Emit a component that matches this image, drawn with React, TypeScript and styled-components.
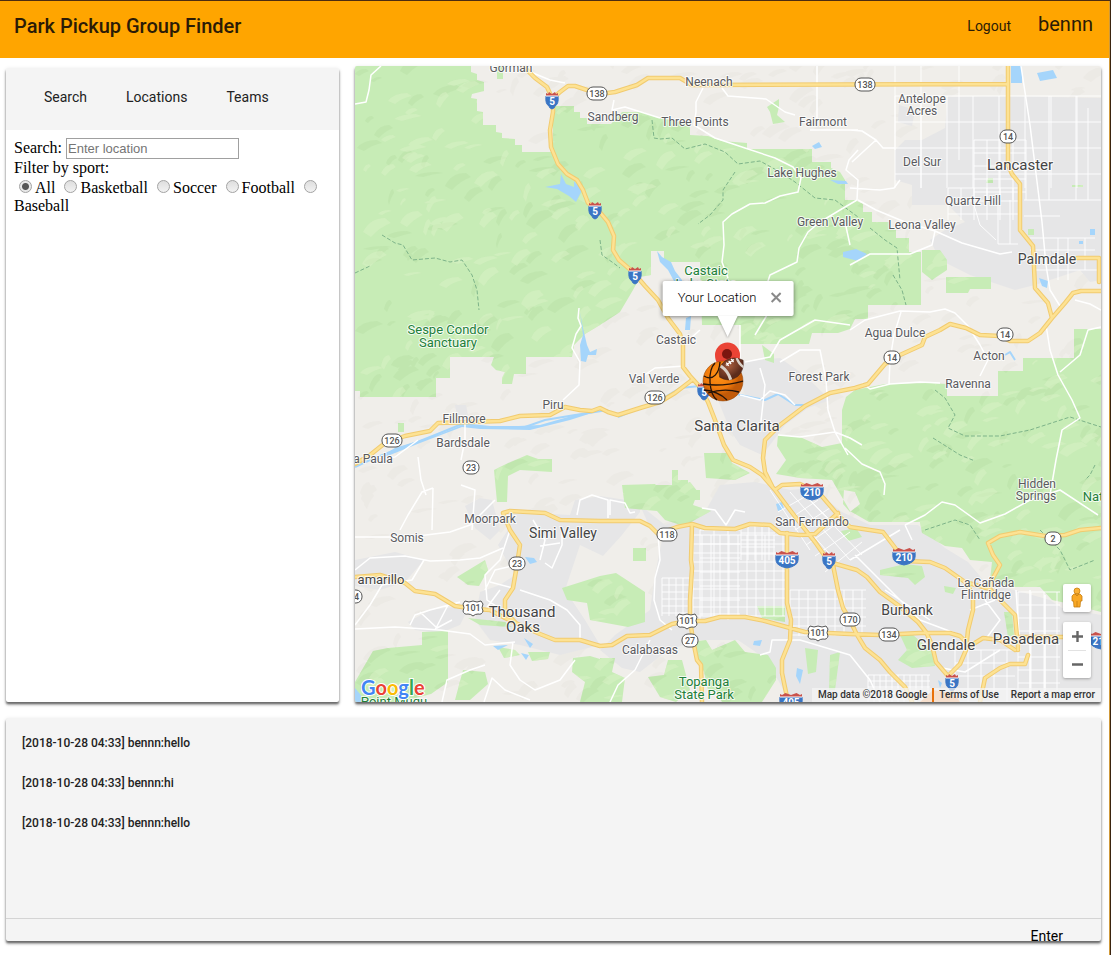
import React, { useState } from 'react';
import styled, { createGlobalStyle } from 'styled-components';

const GlobalStyle = createGlobalStyle`
  *, *::before, *::after { box-sizing: border-box; }
  body { margin: 0; background: #fff; color: #000; font-family: Roboto, sans-serif; }
  button, input { font: inherit; }
`;

const Frame = styled.div`
  min-height: 100vh;
  border-top: 1px solid #4d2c10;
  border-right: 1px solid #3a2410;
  display: flex;
`;

const Page = styled.div`
  flex: 1;
  min-width: 0;
  display: flex;
  flex-direction: column;
  border-right: 1px solid #d09a3a;
`;

const Header = styled.header`
  display: flex;
  align-items: flex-start;
  justify-content: space-between;
  min-height: 57px;
  padding: 11px 16px 0 14px;
  background: #ffa500;
  color: #2b1b06;
`;

const Title = styled.h1`
  margin: 0;
  padding-top: 2px;
  font-size: 20px;
  line-height: 24px;
  font-weight: 500;
`;

const Account = styled.div`
  display: flex;
  gap: 27px;
  align-items: flex-start;
`;

const LogoutLink = styled.a`
  padding-top: 2px;
  color: inherit;
  font-size: 14px;
  line-height: 24px;
  text-decoration: none;
`;

const UserName = styled.span`
  font-size: 20px;
  line-height: 24px;
`;

const Content = styled.main`
  flex: 1;
  display: flex;
  flex-direction: column;
  gap: 16px;
  padding: 8px 8px 14px 6px;
`;

const TopRow = styled.div`
  flex: 1;
  display: grid;
  grid-template-columns: 333fr 746fr;
  gap: 16px;
  min-height: 480px;
`;

const Panel = styled.section`
  position: relative;
  overflow: hidden;
  background: #fff;
  border-radius: 2px;
  box-shadow: 0 2px 2px rgba(0, 0, 0, 0.4), 0 3px 3px rgba(0, 0, 0, 0.25),
    0 1px 4px rgba(0, 0, 0, 0.12);
`;

const SidePanel = styled(Panel)`
  margin-top: 2px;
`;

const Tabs = styled.nav`
  display: flex;
  align-items: center;
  gap: 1px;
  min-height: 62px;
  padding: 0 19px 4px;
  background: #f4f4f4;
`;

const Tab = styled.button`
  border: 0;
  background: none;
  padding: 0 19px;
  font-size: 14px;
  line-height: 24px;
  color: #222;
  cursor: pointer;
`;

const SearchForm = styled.form`
  padding: 8px;
  font-family: 'Liberation Serif', serif;
  font-size: 16px;
  line-height: 18px;
`;

const SearchInput = styled.input`
  width: 173px;
  height: 21px;
  padding: 1px;
  border: 1px solid #a0a0a0;
  font-family: 'Liberation Sans', sans-serif;
  font-size: 13px;
  &::placeholder { color: #757575; opacity: 1; }
`;

const Filters = styled.fieldset`
  margin: 0;
  padding: 0;
  border: 0;
  min-width: 0;
`;

const Legend = styled.legend`
  padding: 0;
`;

const Radio = styled.input`
  appearance: none;
  width: 13px;
  height: 13px;
  margin: 3px 3px 0 5px;
  border: 1px solid #a3a3a3;
  border-radius: 50%;
  background: linear-gradient(#dedede, #f2f2f2);
  &:checked { background: radial-gradient(circle, #555 0 3px, #e8e8e8 4px); }
`;

const MapCanvas = styled.svg`
  position: absolute;
  inset: 0;
  width: 100%;
  height: 100%;
  background: #f0eeea;
  font-family: Roboto, sans-serif;
`;

const InfoWindow = styled.div`
  position: absolute;
  left: 50%;
  bottom: calc(50% + 68px);
  transform: translateX(-50%);
  display: flex;
  align-items: center;
  gap: 14px;
  height: 35px;
  padding: 0 12px 2px 15px;
  white-space: nowrap;
  background: #fff;
  border-radius: 2px;
  box-shadow: 0 1px 4px rgba(0, 0, 0, 0.45);
  font-size: 13px;
  font-weight: 300;
  line-height: 18px;
  color: #000;
  &::after {
    content: '';
    position: absolute;
    top: 100%;
    left: 50%;
    margin-left: -10px;
    border: 10px solid transparent;
    border-top: 21px solid #fff;
    border-bottom: 0;
    filter: drop-shadow(0 1px 1px rgba(0, 0, 0, 0.3));
  }
`;

const IconButton = styled.button`
  display: grid;
  place-items: center;
  padding: 0;
  border: 0;
  background: none;
  cursor: pointer;
`;

const Controls = styled.div`
  position: absolute;
  right: 10px;
  bottom: 24px;
  display: flex;
  flex-direction: column;
  gap: 10px;
`;

const ControlBox = styled.div`
  width: 28px;
  background: #fff;
  border-radius: 2px;
  box-shadow: 0 1px 3px rgba(0, 0, 0, 0.3);
`;

const ControlButton = styled(IconButton)`
  width: 28px;
  height: 28px;
`;

const Divider = styled.hr`
  margin: 0 5px -1px;
  border: 0;
  height: 1px;
  background: #e2e2e2;
`;

const Attribution = styled.div`
  position: absolute;
  right: 0;
  bottom: 0;
  display: flex;
  padding: 0 6px;
  background: rgba(245, 245, 245, 0.72);
  font-size: 10px;
  font-weight: 500;
  line-height: 14px;
  color: #333;
  a { color: inherit; text-decoration: none; margin-left: 12px; }
  a:first-of-type { margin-left: 5px; padding-left: 5px; border-left: 2px solid #e8710a; }
`;

const Chat = styled(Panel)`
  background: #f4f4f4;
`;

const Messages = styled.ul`
  list-style: none;
  margin: 0;
  padding: 5px 16px 0;
  min-height: 200px;
`;

const Message = styled.li`
  font-size: 12px;
  font-weight: 500;
  line-height: 40px;
  color: #222;
`;

const Composer = styled.form`
  display: flex;
  align-items: flex-start;
  height: 23px;
  padding: 0 22px 0 16px;
  border-top: 1px solid #d4d4d4;
`;

const ComposerInput = styled.input`
  flex: 1;
  min-width: 0;
  height: 22px;
  border: 0;
  outline: 0;
  background: none;
  font-size: 14px;
`;

const EnterButton = styled.button`
  padding: 0 16px;
  border: 0;
  background: none;
  font-size: 14px;
  line-height: 34px;
  color: #000;
`;

/* ---------- map data ---------- */

const forests = [
  'M355 66H471V72L477 74V80L484 82V91L472 94L471 98L477 99V111L483 112V125H496V132L502 133V138L515 139V145H522V152H553V106H574V112H580V118H587V124H611L622 112H643L655 117L690 124V135L708 136L722 141L747 143V149H812V162H831V168L840 172L845 180V200H855L863 204V212H872V222H889V229L896 230V238H909V252H921V305H868V319H855L850 329L838 333H812L809 344H740V325H702L700 262H664V251H651V275L640 277L633 290L620 312L600 325L585 334L574 345L572 357H526V374H514L512 384H502V378L505 372L496 370L491 365L494 357H450V378H436V397H360V391H355Z',
  'M1101 329H1074V358H1023V371H998V396H947V384L930 383L885 384L855 390L846 397L842 410V443L822 447L800 437L778 435L777 446L786 460L776 474L800 478L832 480L850 511L869 522H920L922 533L945 546L962 548L970 560L992 562L990 580L1010 587H1040L1052 600L1075 605L1101 612Z',
  'M922 250H940L947 260V270L932 280L922 272ZM946 277H991V289H970L968 293H946Z',
  'M494 470L506 464L527 455L538 459H552V472L520 470L508 476L507 502H497Z',
  'M562 588L600 576L616 573L645 592V622L628 627L590 620L587 603L567 600Z',
  'M622 485L655 484L662 492L690 482L698 492L693 505L711 511L684 526L665 520L657 511L625 508Z',
  'M704 453H728L732 463L750 473L735 480L706 478Z',
  'M672 470H678V480H688V490H700V500H684V493H640V485H672Z',
  'M355 682L373 651L388 648L422 645V632L448 631V682L431 694L400 702H355Z',
  'M457 577L485 560L488 570L479 586L468 585ZM468 618L505 622L512 627L480 625Z',
  'M633 548H646V561H633ZM757 606H785V622L762 618Z',
  'M690 642L706 640L712 650L735 640L745 652L768 655L776 668V680L762 702H722L716 690H708L704 672Z',
  'M600 658L615 658L612 672L625 678L622 702H600ZM648 677L664 675L668 660H682L690 690L676 702L660 697Z',
  'M463 670L485 672L488 684L470 700H455ZM573 658L590 656L610 662V702H580L585 682L572 672Z',
  'M498 647L515 650L520 655L504 658ZM528 652L550 652L548 659L532 661Z',
  'M844 490L855 492L860 504L850 512L843 504ZM841 531L856 528L862 537L848 541Z',
  'M880 570L905 564L922 566L925 577L915 585L908 578L880 575ZM944 586L956 588L953 594L945 592Z',
  'M900 635L912 634L932 652L935 666L912 668L898 660L907 650Z',
  'M1004 612L1012 612L1014 635L1008 637ZM805 648L818 650L816 672L808 674ZM830 655L840 652L835 690H829Z',
  'M988 178H993V183H986ZM1028 229H1034V235H1028ZM1072 185H1083V187H1072ZM767 107L779 99V107L777 115L785 122L773 124L770 112Z',
  'M398 423H404V432H398ZM497 66H503V79H497ZM762 345L774 354V363L765 360Z',
];

const urban = [
  'M948 97L1008 96L1101 98V280L1090 282L1080 270L1035 285L1015 290L970 275L940 260L930 240L945 230L965 222L948 205H912V185L895 180V150L905 140H922L945 128Z',
  'M899 105L915 110L912 126L898 122Z',
  'M735 362L780 358L800 372L815 385L830 400L808 408L785 425L770 445L762 455L740 445L730 430L718 400L745 395Z',
  'M640 505L665 525L705 512L720 485L755 482L790 490L812 488L842 512L870 525L918 525L945 548L968 562L985 582L1050 600L1062 608L1101 615V702H790L778 680L760 655L738 640L700 640L668 650L640 672L622 668L600 650L615 635L650 610L655 575L662 540L650 528Z',
  'M515 512L570 515L575 500L600 496L640 502L640 512L622 535L603 556L580 545L565 590L585 620L600 645L560 655L520 645L490 640L475 620L480 592L500 585L515 575L498 545L508 530Z',
  'M465 506L480 498L492 500L500 530L490 540L475 528ZM355 560L395 552L424 560L405 582L380 590L355 586Z',
  'M408 622L430 610L470 605L460 625L440 633L415 630ZM455 405H466L468 415H457Z',
];

const lakes = [
  'M545 187L560 184L561 174L566 184L574 187V181L582 190L576 202L569 196L557 189Z',
  'M657 251L662 257L671 262L675 271L682 280L684 295L675 283L668 270L660 262Z',
  'M580 312L583 328L587 345L590 352L597 349L596 355L588 355L586 362L581 361L580 345L583 335Z',
  'M686 318L691 316L690 330L685 330ZM843 252L856 249L867 254L858 261L843 257Z',
  'M812 146L819 142L822 147L815 149ZM830 180L846 181L848 184L838 184Z',
  'M1037 73L1053 70L1057 78L1040 81ZM1011 66H1022V83H1011ZM1090 229H1095V235H1090Z',
  'M1039 278L1048 281L1047 288L1042 286ZM525 557L534 558L537 562L530 564ZM1079 241H1083V244H1079Z',
  'M776 504L782 502L784 509L778 511ZM754 641L762 640L760 646L753 645ZM797 668L803 670L800 684L796 676Z',
  'M493 646L508 645L498 650ZM524 638L533 644L530 648ZM521 653L529 655L526 660Z',
  'M355 688L360 694L366 702H355ZM938 680L942 683L940 688Z',
];

const highways = [
  'M523 66L535 78L547 87L553 100V112L550 130L551 147L558 164L567 174L577 180L583 190L588 203L598 210L608 222L614 236L613 250L619 260L633 272L645 286L658 300L668 318L680 334L683 345V367L690 376L700 387L708 402L715 420L724 445L733 460L750 467L762 475L775 490L790 510L800 523L815 542L829 562L857 570L867 577L880 592L898 605L918 622L926 632L932 645L936 662L948 676L952 690',
  'M553 98L560 92L568 86H575L590 91L600 94L615 92L637 85L648 78H680L692 85L1008 84',
  'M1008 66V165L1012 174L1020 184V230L1033 246L1035 288L1048 303L1052 318L1040 333L1028 341H1010L1000 336L980 335L966 328L950 324L940 330L925 337L922 345L900 355L885 364L868 384L855 388L830 393L805 406L780 425L765 440L763 458L765 472L772 486',
  'M1052 318L1065 303L1073 293L1081 291H1101M1077 258H1099V282',
  'M355 464L370 455L385 443L405 436L430 431L438 423L470 422L500 421L520 416L550 415L565 407L580 410L592 411L600 408L608 412L618 415L640 408L660 402L675 393L692 380',
  'M355 577L380 575L405 583L415 591L435 594L455 606L475 609L490 610L505 618L520 625L540 634L555 640H580L600 646L612 645L627 636L650 635L672 624L687 621H705L720 617H745L765 621L790 628L805 632L850 634L880 635L920 633L950 633L960 636L970 646L983 638L1000 640L1015 650',
  'M503 513L510 511L545 513L560 520L600 521H640L650 526L658 534L677 527L692 524L705 528L735 529L750 524L770 525L780 533L800 535L815 534L828 522L838 513',
  'M503 513L510 530L520 545L517 565L513 588L505 600V612L516 623',
  'M692 524L691 560L692 568L690 600V620L693 640L697 660L701 665L702 702',
  'M775 490L782 485L800 484L820 494L838 515L850 527L883 532L893 545L905 561L930 562L945 568L965 582L990 589L1000 600L1015 615L1017 637H1101',
  'M787 533V603L791 620L790 640L782 660V673L788 702',
  'M833 565L838 590L843 608L850 620L856 633L865 648L880 660L890 672L905 687L912 702',
  'M990 589L993 578L1000 565L993 555L988 543L1000 536L1020 532L1045 536L1065 535L1080 530L1101 528',
  'M966 583L973 595V610L968 630L966 650L960 664L948 676',
  'M1028 655L1025 664L1010 664L1000 668L985 678L980 702M1018 637V650',
];

const minorRoads = [
  'M355 104L366 102L369 90L371 75L381 66M533 73L550 80L565 83',
  'M703 88L696 102V112L694 125L715 138L745 148L775 158L793 167L801 178L798 192L780 196L765 203L750 204L732 214L723 222L724 245L722 262L728 278M722 88L728 96L766 99L785 112L795 115M817 66V125M810 130H858',
  'M614 100L612 110L625 107L660 118',
  'M857 200L840 210L820 222L808 232L799 248L797 262L770 275L765 290L767 315L755 335M845 222L850 245M857 200L858 180L846 170L849 160L858 150',
  'M850 130L862 131L876 140L883 148H895M876 140L852 162M850 188L880 190L894 188L900 180M858 200L876 210L905 222L935 231L962 243L1000 254L1012 252M935 231L932 245L910 254L870 254L850 265',
  'M1021 66L1030 125L1042 222L1046 265L1050 290L1060 306M1046 325L1050 350L1058 375L1072 400L1080 418L1062 430L1056 460L1050 495',
  'M850 330L865 320L900 311L930 312L945 309L955 313L968 326L980 345L988 360L980 376M901 312L894 335L890 360L889 384M862 383L870 389L890 384L920 382L940 383',
  'M1101 327L1088 330L1080 355L1060 372M1101 310L1090 304L1075 300',
  'M579 308L578 318L581 326L576 334L572 348L580 362L579 385L563 400M465 422V440L461 460M418 440L395 457L372 458M418 457L421 480L426 495',
  'M461 485L475 490L472 530M400 530L408 515L422 492L433 488M433 488L432 530M355 537H410L450 532L470 525L495 500',
  'M355 570L370 558L405 556L430 561L460 560L480 558L503 548M424 560L412 580L382 585M382 585L370 605L355 625',
  'M355 629L395 627L440 630L470 634L485 645L515 642',
  'M410 625L415 615L430 610L460 602M435 630L448 605M420 612L437 628L452 620M513 642L510 665L520 680L535 690L560 680L575 660',
  'M442 702L447 680L470 670L485 665M484 702L492 678L505 690L530 700M610 702L618 685L635 670L650 640',
  'M510 530L500 560L485 575L487 600L505 612M517 565L495 570L485 590M513 588L490 582M533 520L545 540L540 560M577 515L580 500L592 495L608 500V518M540 546L560 543M545 563L552 568L562 545V530M520 590L550 600L567 610L580 625V640M485 610L500 590',
  'M600 521H628M610 515V500L625 503L630 513L635 512M658 534L660 560L655 578L654 600L660 620L672 630M702 508L715 510L726 525L735 510L745 512',
  'M683 345L700 330M640 378L655 368L685 366M740 395L760 400L770 391L785 395L795 405M745 362L770 357L780 340L815 320L850 325M740 325V362M760 368L765 385L760 430M780 362L800 350H820L826 380L828 410L835 432L850 438L862 445',
  'M778 435L800 437L835 432L848 455M845 448L862 464L880 472L885 484L884 495M905 525L925 515L942 502L955 505L980 523L1005 514L1030 500L1060 490L1098 515',
  'M905 525L912 540M760 655L770 652L772 640L800 640L850 655M850 560L900 530M855 555L920 620L960 635M885 590L930 620M942 668L965 672L1000 650M970 610L995 600M850 655L870 680L880 702',
  'M1016 590L1020 650M1030 590V700M1045 595V700M985 600L1000 620L985 640',
];

const rivers = [
  'M355 467L370 460L395 450L415 443L440 433L462 424L490 427L525 427L545 420L575 415L608 410',
  'M618 417L635 410L655 403L680 388L700 386L745 396L765 400L778 394L795 405H808M1005 355L1010 352L1015 360',
];

const trails = [
  'M382 235L395 243L403 245L412 260L435 258L450 262L462 260L472 275L477 290L479 310M355 273L370 266',
  'M652 120L654 138L660 139L672 138L685 149L705 144L725 152L738 164L760 161L780 172L795 182L815 198L835 200L858 217M735 172L723 190V200L710 215L698 224',
  'M893 275L902 290L906 305M870 228L885 240L897 248L900 280M935 390L945 398L955 415L948 428L965 436L1000 436L1030 430L1070 417L1101 427M933 438L960 455L975 461',
  'M925 530L955 520L970 525L980 540M1040 530L1060 550L1070 570L1095 560M600 240L602 255L612 262L620 268M1095 465L1090 475L1085 480',
];

const range = (from: number, to: number, step: number) =>
  Array.from({ length: Math.floor((to - from) / step) + 1 }, (_, i) => from + i * step);

const streetGrid = (x1: number, y1: number, x2: number, y2: number, step: number) =>
  range(x1, x2, step).map((x) => `M${x} ${y1}V${y2}`).join('') +
  range(y1, y2, step).map((y) => `M${x1} ${y}H${x2}`).join('');

const coarseStreets =
  streetGrid(895, 96, 1101, 188, 26) +
  streetGrid(974, 140, 1026, 200, 13) +
  streetGrid(948, 188, 1020, 220, 13) +
  'M921 66V188M895 66V150M959 66V160M1088 108V200M1049 96V200M1076 96V200M998 200V244M1010 200V244M998 244H1018M1024 200H1101M1024 216H1060M1030 238H1095M1030 250H1095M1058 238V280M1068 238V280M1085 238V270M1035 270H1099M974 205L980 225L996 240';
const fineStreets =
  streetGrid(693, 535, 785, 616, 9) +
  streetGrid(741, 526, 775, 560, 7) +
  streetGrid(662, 578, 690, 616, 7) +
  streetGrid(790, 590, 866, 636, 9) +
  streetGrid(700, 530, 740, 620, 14);
const denseStreets = streetGrid(868, 675, 930, 702, 6) + streetGrid(1018, 592, 1060, 690, 13) + streetGrid(955, 650, 1015, 702, 13);
const diagonalStreets = 'M780 498L835 560M790 492L850 560M800 490L862 555M810 500L830 520M778 512L808 495M785 522L818 500M795 530L830 508M806 545L842 520M815 556L850 532M825 572L862 542M770 490L810 550';

/* Relief shading: slanted facets from a seeded generator. */
const facets = (count: number, seed: number) => {
  let s = seed;
  const rnd = () => {
    s = (s * 16807) % 2147483647;
    return s / 2147483647;
  };
  let d = '';
  for (let i = 0; i < count; i++) {
    const x = Math.round(355 + rnd() * 746);
    const y = Math.round(66 + rnd() * 636);
    const w = Math.round(5 + rnd() * 18);
    const h = Math.round(3 + rnd() * 11);
    d += `M${x} ${y}q${Math.round(w * 0.3)} ${-h} ${w} ${-h}l${Math.round(w / 4)} ${Math.round(h / 3)}q${-Math.round(w * 0.5)} ${Math.round(h * 0.3)} ${-Math.round(w * 0.9)} ${h}z`;
  }
  return d;
};
const reliefDark = facets(600, 91);
const reliefLight = facets(560, 4711);

type LabelSpec = [string, number, number, number?, string?];
const TOWN = '#5a5a5e';
const CITY = '#444';
const PARK = '#23803a';
const labels: LabelSpec[] = [
  ['Gorman', 511, 72], ['Neenach', 709, 86], ['Sandberg', 613, 121], ['Three Points', 695, 126],
  ['Fairmont', 823, 126], ['Antelope', 922, 103], ['Acres', 922, 115], ['Del Sur', 922, 166],
  ['Lancaster', 1020, 170, 15, CITY], ['Lake Hughes', 802, 177], ['Quartz Hill', 973, 205],
  ['Green Valley', 830, 226], ['Leona Valley', 922, 229], ['Palmdale', 1047, 264, 14, CITY],
  ['Castaic', 706, 275, 13, PARK], ['Lake State', 706, 288, 13, PARK],
  ['Sespe Condor', 448, 334, 13, PARK], ['Sanctuary', 448, 347, 13, PARK],
  ['Castaic', 676, 344], ['Agua Dulce', 895, 337], ['Acton', 989, 360], ['Ravenna', 968, 388],
  ['Val Verde', 654, 383], ['Forest Park', 819, 381], ['Piru', 553, 409], ['Fillmore', 464, 423],
  ['Bardsdale', 463, 447], ['a Paula', 373, 463], ['Santa Clarita', 737, 431, 15, CITY],
  ['Moorpark', 490, 523], ['Simi Valley', 563, 538, 14, CITY], ['Somis', 407, 542],
  ['San Fernando', 812, 526], ['Hidden', 1037, 488], ['Springs', 1036, 500],
  ['National', 1107, 501, 13, PARK], ['amarillo', 381, 584, 13, CITY],
  ['Thousand', 522, 617, 15, CITY], ['Oaks', 523, 632, 15, CITY], ['Calabasas', 650, 654],
  ['Topanga', 704, 686, 13, PARK], ['State Park', 704, 699, 13, PARK],
  ['La Cañada', 986, 587], ['Flintridge', 986, 599], ['Burbank', 907, 615, 14, CITY],
  ['Glendale', 946, 650, 15, CITY], ['Pasadena', 1026, 644, 15, CITY],
  ['Point Mugu', 394, 706, 13, PARK],
];

type ShieldKind = 'state' | 'us' | 'interstate';
const shields: [ShieldKind, string, number, number][] = [
  ['interstate', '5', 552, 100], ['interstate', '5', 595, 210], ['interstate', '5', 635, 275],
  ['interstate', '5', 704, 391], ['interstate', '210', 812, 491], ['interstate', '405', 787, 559],
  ['interstate', '5', 829, 560], ['interstate', '210', 904, 556], ['interstate', '5', 952, 682],
  ['interstate', '210', 1101, 640], ['interstate', '405', 791, 701],
  ['state', '138', 597, 94], ['state', '138', 865, 85], ['state', '14', 1008, 137],
  ['state', '14', 1005, 335], ['state', '14', 892, 358], ['state', '126', 655, 398],
  ['state', '126', 392, 441], ['state', '23', 471, 468], ['state', '118', 667, 535],
  ['state', '23', 517, 564], ['state', '2', 1053, 539], ['state', '27', 690, 641],
  ['state', '170', 850, 620], ['state', '134', 889, 635], ['state', '34', 354, 597],
  ['us', '101', 473, 608], ['us', '101', 687, 621], ['us', '101', 818, 633],
];

function Shield({ kind, text, x, y }: { kind: ShieldKind; text: string; x: number; y: number }) {
  const wide = text.length > 2;
  if (kind === 'interstate') {
    const w = wide ? 11 : 6;
    return (
      <g transform={`translate(${x} ${y})`}>
        <path d={`M${-w} -4H${w}Q${w + 1} 4 ${w - 3} 6Q${w / 2} 8 0 9Q${-w / 2} 8 ${3 - w} 6Q${-w - 1} 4 ${-w} -4Z`} fill="#3a75c4" stroke="#3a75c4" strokeWidth="1" />
        <path d={`M${-w} -4V-7L${-w + 2} -6L${-w / 2} -8L0 -6L${w / 2} -8L${w - 2} -6L${w} -7V-4Z`} fill="#c9524c" />
        <path d={`M${-w} -4H${w}`} stroke="#fff" strokeWidth="1" />
        <text y="5" textAnchor="middle" fontSize="10" fontWeight="700" fill="#fff">{text}</text>
      </g>
    );
  }
  const w = wide ? 10 : 8;
  return (
    <g transform={`translate(${x} ${y})`}>
      {kind === 'state' ? (
        <rect x={-w} y="-7" width={w * 2} height="13" rx="6" fill="#fff" stroke="#555" />
      ) : (
        <path d="M-8 -7Q-4 -5 0 -7Q4 -5 8 -7L10 -4Q8 0 10 3Q9 7 5 6Q2 6 0 8Q-2 6 -5 6Q-9 7 -10 3Q-8 0 -10 -4Z" fill="#fff" stroke="#555" />
      )}
      <text y="3" textAnchor="middle" fontSize="9" fontWeight="500" fill="#555">{text}</text>
    </g>
  );
}

function Markers() {
  return (
    <g>
      <path d="M728 384C727 371 715 367 715 355A12.500 12.500 0 0 1 740 355C740 367 729 371 728 384Z" fill="#ea4335" />
      <circle cx="727" cy="354" r="5" fill="#7c160f" />
      <circle cx="723" cy="381" r="20" fill="url(#ball)" stroke="#8a4308" strokeWidth="0.500" />
      <path d="M703 384Q722 387 743 381M720 362C719 374 713 380 706 377L704 376M704 390Q718 391 727 400M715 363C707 371 709 394 717 400M708 393Q724 388 739 392" fill="none" stroke="#251408" strokeWidth="1.300" />
      <g transform="translate(731 369) rotate(-36)">
        <path d="M-14 0Q-10 -10 1 -10Q10 -9 15 0Q10 9 1 10Q-10 10 -14 0Z" fill="url(#football)" stroke="#3f1f14" strokeWidth="0.500" />
        <path d="M-8 -8Q-5 0 -8 8L-5 9Q-2 0 -5 -9ZM10 -6Q8 0 10 6L12 5Q11 0 12 -5Z" fill="#d9d0c8" />
        <path d="M-2 -6H8M0 -8V-4M3 -8V-4M6 -8V-4" stroke="#fff" strokeWidth="1.300" fill="none" />
      </g>
    </g>
  );
}

function AreaMap() {
  const forestPath = forests.join('');
  return (
    <MapCanvas viewBox="355 66 746 636" preserveAspectRatio="xMidYMid slice" role="img" aria-label="Map of Santa Clarita and surroundings">
      <defs>
        <clipPath id="forestClip"><path d={forestPath} /></clipPath>
        <radialGradient id="ball" cx="0.400" cy="0.350">
          <stop offset="0" stopColor="#ff9416" />
          <stop offset="0.700" stopColor="#f07a0c" />
          <stop offset="1" stopColor="#c25a08" />
        </radialGradient>
        <radialGradient id="football" cx="0.500" cy="0.350">
          <stop offset="0" stopColor="#a35a3c" />
          <stop offset="1" stopColor="#5c2c1c" />
        </radialGradient>
      </defs>
      <path d={reliefDark} fill="#e4e2dd" opacity="0.350" />
      <path d={urban.join('')} fill="#e6e6e7" />
      <path d={forestPath} fill="#c7ecb6" />
      <g clipPath="url(#forestClip)">
        <path d={reliefDark} fill="#b0d9a0" opacity="0.320" />
        <path d={reliefLight} fill="#daf2c6" opacity="0.500" />
      </g>
      <path d={lakes.join('')} fill="#a5d5fb" />
      <path d={rivers.join('')} fill="none" stroke="#a5d5fb" strokeWidth="2" strokeLinejoin="round" />
      <path d="M372 462L395 448L440 434L462 425L500 427L540 425L575 415L595 412L570 420L530 430L480 429L462 427L420 443L385 457Z" fill="#a5d5fb" />
      <path d={trails.join('')} fill="none" stroke="#7db389" strokeWidth="1" strokeDasharray="4 2" />
      <g fill="none" stroke="#fff" strokeLinejoin="round">
        <path d={coarseStreets} strokeWidth="1" strokeOpacity="0.900" />
        <path d={fineStreets + diagonalStreets} strokeWidth="1" strokeOpacity="0.900" />
        <path d={denseStreets} strokeWidth="1" strokeOpacity="0.900" />
        <path d={minorRoads.join('')} strokeWidth="1.500" />
      </g>
      <g fill="none" strokeLinejoin="round" strokeLinecap="round">
        <path d={highways.join('')} stroke="#f1cb70" strokeWidth="4.500" />
        <path d={highways.join('')} stroke="#fde293" strokeWidth="2.500" />
      </g>
      <path d="M920 702L933 690L955 694L960 702Z" fill="#f7a566" />
      <g textAnchor="middle" stroke="#fff" strokeWidth="2" strokeOpacity="0.800" strokeLinejoin="round" paintOrder="stroke">
        {labels.map(([text, x, y, size = 12, color = TOWN]) => (
          <text key={text + x + y} x={x} y={y} fontSize={size} fill={color}>{text}</text>
        ))}
      </g>
      {shields.map(([kind, text, x, y]) => (
        <Shield key={text + x + y} kind={kind} text={text} x={x} y={y} />
      ))}
      <Markers />
    </MapCanvas>
  );
}

const GoogleMark = styled.a`
  position: absolute;
  left: 6px;
  bottom: 0;
  display: block;
  line-height: 0;
`;

function GoogleLogo() {
  return (
    <GoogleMark href="#google" aria-label="Google">
      <svg width="66" height="26" viewBox="0 0 66 26">
        <text x="0" y="19" fontFamily="Lato, sans-serif" fontSize="20" fontWeight="700" stroke="#fff" strokeWidth="2" paintOrder="stroke">
          <tspan fill="#4285f4">G</tspan>
          <tspan fill="#ea4335">o</tspan>
          <tspan fill="#fbbc05">o</tspan>
          <tspan fill="#4285f4">g</tspan>
          <tspan fill="#34a853">l</tspan>
          <tspan fill="#ea4335">e</tspan>
        </text>
      </svg>
    </GoogleMark>
  );
}

const sports = ['All', 'Basketball', 'Soccer', 'Football', 'Baseball'];
const messages = [
  { time: '2018-10-28 04:33', user: 'bennn', text: 'hello' },
  { time: '2018-10-28 04:33', user: 'bennn', text: 'hi' },
  { time: '2018-10-28 04:33', user: 'bennn', text: 'hello' },
];

export default function App() {
  const [sport, setSport] = useState('All');
  return (
    <>
      <GlobalStyle />
      <Frame>
        <Page>
          <Header>
            <Title>Park Pickup Group Finder</Title>
            <Account>
              <LogoutLink href="#logout">Logout</LogoutLink>
              <UserName>bennn</UserName>
            </Account>
          </Header>
          <Content>
            <TopRow>
              <SidePanel>
                <Tabs>
                  <Tab type="button">Search</Tab>
                  <Tab type="button">Locations</Tab>
                  <Tab type="button">Teams</Tab>
                </Tabs>
                <SearchForm onSubmit={(e) => e.preventDefault()}>
                  <label htmlFor="location">Search:</label>{' '}
                  <SearchInput id="location" type="text" placeholder="Enter location" />
                  <Filters>
                    <Legend>Filter by sport:</Legend>
                    {sports.map((name) => (
                      <React.Fragment key={name}>
                        <label>
                          <Radio type="radio" name="sport" checked={sport === name} onChange={() => setSport(name)} />
                          {name}
                        </label>{' '}
                      </React.Fragment>
                    ))}
                  </Filters>
                </SearchForm>
              </SidePanel>
              <Panel>
                <AreaMap />
                <GoogleLogo />
                <InfoWindow>
                  Your Location
                  <IconButton type="button" aria-label="Close">
                    <svg width="11" height="11" viewBox="0 0 11 11">
                      <path d="M1 1L10 10M10 1L1 10" stroke="#8a8a8a" strokeWidth="2" />
                    </svg>
                  </IconButton>
                </InfoWindow>
                <Controls>
                  <ControlBox>
                    <ControlButton type="button" aria-label="Street View">
                      <svg width="14" height="22" viewBox="0 0 14 22">
                        <circle cx="7" cy="4" r="3" fill="#fbb034" stroke="#c77f12" strokeWidth="0.800" />
                        <path d="M4 7H10L12 9V14H10.500L10 20H4L3.500 14H2V9Z" fill="#f9a825" stroke="#c77f12" strokeWidth="0.800" />
                        <path d="M7 14V20M5 7L7 9L9 7" stroke="#c77f12" fill="none" strokeWidth="0.800" />
                      </svg>
                    </ControlButton>
                  </ControlBox>
                  <ControlBox>
                    <ControlButton type="button" aria-label="Zoom in">
                      <svg width="11" height="11" viewBox="0 0 11 11">
                        <path d="M0 5.500H11M5.500 0V11" stroke="#666" strokeWidth="2.400" />
                      </svg>
                    </ControlButton>
                    <Divider />
                    <ControlButton type="button" aria-label="Zoom out">
                      <svg width="11" height="11" viewBox="0 0 11 11">
                        <path d="M0 5.500H11" stroke="#666" strokeWidth="2.400" />
                      </svg>
                    </ControlButton>
                  </ControlBox>
                </Controls>
                <Attribution>
                  <span>Map data ©2018 Google</span>
                  <a href="#terms">Terms of Use</a>
                  <a href="#report">Report a map error</a>
                </Attribution>
              </Panel>
            </TopRow>
            <Chat>
              <Messages>
                {messages.map((m, i) => (
                  <Message key={i}>{`[${m.time}] ${m.user}:${m.text}`}</Message>
                ))}
              </Messages>
              <Composer onSubmit={(e) => e.preventDefault()}>
                <ComposerInput type="text" aria-label="Message" />
                <EnterButton type="submit">Enter</EnterButton>
              </Composer>
            </Chat>
          </Content>
        </Page>
      </Frame>
    </>
  );
}
